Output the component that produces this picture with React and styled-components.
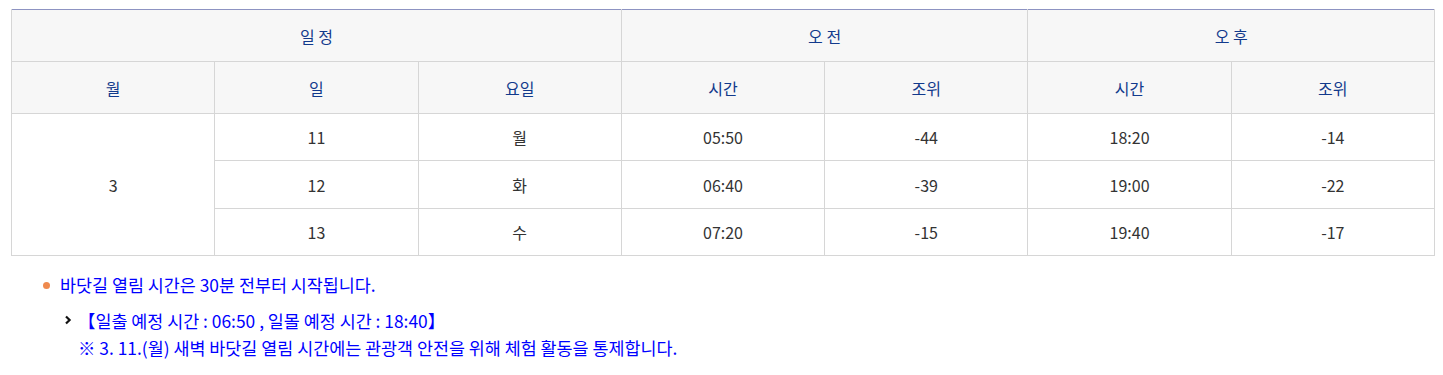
import styled, { createGlobalStyle } from "styled-components";

const GlobalStyle = createGlobalStyle`
  body {
    margin: 0;
    background: #fff;
    font-family: "Noto Sans CJK KR", "Noto Sans", sans-serif;
  }
`;

const schedule = [
  { day: "11", weekday: "월", amTime: "05:50", amTide: "-44", pmTime: "18:20", pmTide: "-14" },
  { day: "12", weekday: "화", amTime: "06:40", amTide: "-39", pmTime: "19:00", pmTide: "-22" },
  { day: "13", weekday: "수", amTime: "07:20", amTide: "-15", pmTime: "19:40", pmTide: "-17" },
];

export default function App() {
  return (
    <Page>
      <GlobalStyle />
      <TideTable>
        <colgroup>
          {Array.from({ length: 7 }).map((_, i) => (
            <col key={i} style={{ width: `${100 / 7}%` }} />
          ))}
        </colgroup>
        <thead>
          <tr>
            <Th colSpan={3}>일 정</Th>
            <Th colSpan={2}>오 전</Th>
            <Th colSpan={2}>오 후</Th>
          </tr>
          <tr>
            <Th>월</Th>
            <Th>일</Th>
            <Th>요일</Th>
            <Th>시간</Th>
            <Th>조위</Th>
            <Th>시간</Th>
            <Th>조위</Th>
          </tr>
        </thead>
        <tbody>
          {schedule.map((row, i) => (
            <tr key={row.day}>
              {i === 0 && <Td rowSpan={schedule.length}>3</Td>}
              <Td $tall={i === 1}>{row.day}</Td>
              <Td>{row.weekday}</Td>
              <Td>{row.amTime}</Td>
              <Td>{row.amTide}</Td>
              <Td>{row.pmTime}</Td>
              <Td>{row.pmTide}</Td>
            </tr>
          ))}
        </tbody>
      </TideTable>

      <Notes>
        <NoteItem>
          <Dot />
          바닷길 열림 시간은 30분 전부터 시작됩니다.
        </NoteItem>
        <SubNote>
          <Chevron viewBox="0 0 8 10">
            <path d="M2 1.5 L5.6 5 L2 8.5" fill="none" stroke="#111" strokeWidth="2.2" />
          </Chevron>
          <SubText>
            <span>【일출 예정 시간 : 06:50 , 일몰 예정 시간 : 18:40】</span>
            <span>※ 3. 11.(월) 새벽 바닷길 열림 시간에는 관광객 안전을 위해 체험 활동을 통제합니다.</span>
          </SubText>
        </SubNote>
      </Notes>
    </Page>
  );
}

const Page = styled.div`
  padding: 9px 8px 0 11px;
`;

const TideTable = styled.table`
  width: 100%;
  table-layout: fixed;
  border-collapse: collapse;
  border-top: 1px solid #8d93c2;
  font-size: 16px;
`;

const Th = styled.th`
  height: 51px;
  padding: 0;
  background: #f7f7f7;
  border: 1px solid #d6d6d6;
  border-top: none;
  color: #123a8c;
  font-weight: 400;
  text-align: center;
  vertical-align: middle;
`;

const Td = styled.td`
  height: ${(p) => (p.$tall ? "47px" : "46px")};
  padding: 0;
  border: 1px solid #d6d6d6;
  color: #333;
  text-align: center;
  vertical-align: middle;
`;

const Notes = styled.div`
  display: flex;
  flex-direction: column;
  margin-top: 16px;
  padding-left: 32px;
  color: #0000ff;
  font-size: 17.4px;
`;

const NoteItem = styled.div`
  display: flex;
  align-items: center;
  gap: 10px;
  line-height: 26px;
`;

const Dot = styled.span`
  width: 7px;
  height: 7px;
  border-radius: 50%;
  background: #ef8a4e;
  flex-shrink: 0;
`;

const SubNote = styled.div`
  display: flex;
  align-items: flex-start;
  gap: 6px;
  margin-top: 9px;
  padding-left: 21px;
`;

const Chevron = styled.svg`
  width: 8px;
  height: 10px;
  margin-top: 8px;
  flex-shrink: 0;
`;

const SubText = styled.div`
  display: flex;
  flex-direction: column;
  line-height: 27px;
`;
